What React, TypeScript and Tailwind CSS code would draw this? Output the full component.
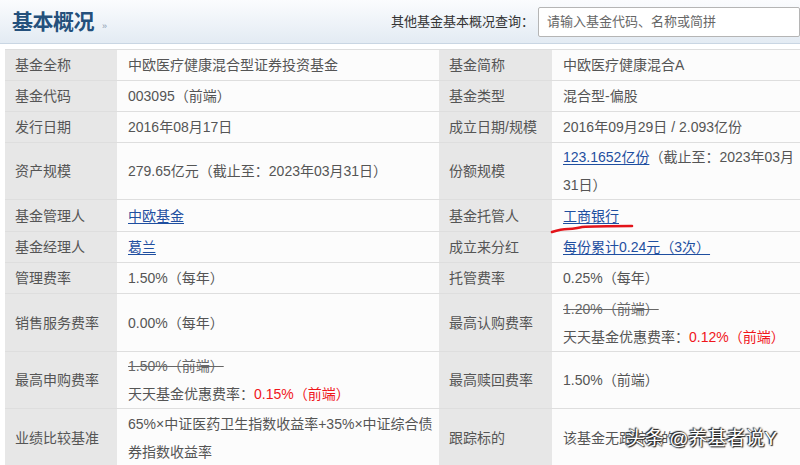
import React from 'react';

type Cell = React.ReactNode;

const link = (t: string) => <a className="text-[#1f4fa0] underline underline-offset-2">{t}</a>;
const strike = (t: string) => <span className="line-through text-[#666]">{t}</span>;
const red = (t: string) => <span className="text-[#f0161b]">{t}</span>;

const rows: { h: string; a: [string, Cell]; b: [string, Cell] }[] = [
  { h: 'h-[31px]', a: ['基金全称', '中欧医疗健康混合型证券投资基金'], b: ['基金简称', '中欧医疗健康混合A'] },
  { h: 'h-[31px]', a: ['基金代码', '003095（前端）'], b: ['基金类型', '混合型-偏股'] },
  { h: 'h-[31px]', a: ['发行日期', '2016年08月17日'], b: ['成立日期/规模', '2016年09月29日 / 2.093亿份'] },
  {
    h: 'h-[57px]',
    a: ['资产规模', '279.65亿元（截止至：2023年03月31日）'],
    b: ['份额规模', <>{link('123.1652亿份')}（截止至：2023年03月31日）</>],
  },
  { h: 'h-[32px]', a: ['基金管理人', link('中欧基金')], b: ['基金托管人', link('工商银行')] },
  { h: 'h-[31px]', a: ['基金经理人', link('葛兰')], b: ['成立来分红', link('每份累计0.24元（3次）')] },
  { h: 'h-[31px]', a: ['管理费率', '1.50%（每年）'], b: ['托管费率', '0.25%（每年）'] },
  {
    h: 'h-[58px]',
    a: ['销售服务费率', '0.00%（每年）'],
    b: ['最高认购费率', <>{strike('1.20%（前端）')}<br />天天基金优惠费率：{red('0.12%（前端）')}</>],
  },
  {
    h: 'h-[56px]',
    a: ['最高申购费率', <>{strike('1.50%（前端）')}<br />天天基金优惠费率：{red('0.15%（前端）')}</>],
    b: ['最高赎回费率', '1.50%（前端）'],
  },
  {
    h: 'h-[58px]',
    a: ['业绩比较基准', '65%×中证医药卫生指数收益率+35%×中证综合债券指数收益率'],
    b: ['跟踪标的', '该基金无跟踪标的'],
  },
];

export default function App() {
  return (
    <div
      className="relative w-[800px] h-[465px] overflow-hidden bg-white text-[#555]"
      style={{ fontFamily: '"Liberation Sans", "Noto Sans CJK SC", sans-serif' }}
    >
      <div className="flex h-[44px] items-center justify-between border-b border-[#c9d6e3] bg-gradient-to-b from-[#fbfcfe] to-[#e3ebf3] pl-[12px]">
        <div className="flex items-end gap-[8px]">
          <h1 className="text-[21px] font-bold tracking-[-0.5px] text-[#24507c]">基本概况</h1>
          <span className="mb-[6px] text-[9px] leading-none text-[#8a9ab0]">»</span>
        </div>
        <div className="flex items-center">
          <span className="text-[13px] text-[#333]">其他基金基本概况查询：</span>
          <div className="ml-[4px] flex h-[30px] w-[262px] items-center rounded-[2px] border border-[#b5b5b5] bg-white pl-[8px] text-[13px] text-[#666]">
            请输入基金代码、名称或简拼
          </div>
        </div>
      </div>
      <div className="pl-[5px] pt-[5px]">
        <table className="w-[795px] table-fixed border-collapse text-[14px] leading-[28px]">
          <colgroup>
            <col className="w-[112px]" />
            <col className="w-[322px]" />
            <col className="w-[113px]" />
            <col className="w-[248px]" />
          </colgroup>
          <tbody>
            {rows.map((r, i) => (
              <tr key={i} className={`${r.h} border-y border-[#dedede]`}>
                <td className="bg-[#e7e7e7] pl-[10px] align-middle text-[#555]">{r.a[0]}</td>
                <td className="bg-[#fcfcfc] pl-[11px] pr-[6px] align-middle">{r.a[1]}</td>
                <td className="bg-[#e7e7e7] pl-[10px] align-middle text-[#555]">{r.b[0]}</td>
                <td className="bg-[#fcfcfc] pl-[11px] pr-[2px] align-middle">{r.b[1]}</td>
              </tr>
            ))}
          </tbody>
        </table>
      </div>
      <svg className="absolute left-[550px] top-[221px]" width="84" height="14" viewBox="0 0 84 14">
        <path d="M2 11 C8 9 12 8 18 8 C24 8 26 7 32 6 C44 5 60 5 82 5" stroke="#e3141a" strokeWidth="2.6" fill="none" strokeLinecap="round" />
      </svg>
      <div
        className="absolute left-[626px] top-[425px] whitespace-nowrap text-[19px] leading-[28px] text-white"
        style={{ textShadow: '0 0 2px #222, 1px 1px 1px #222, -1px -1px 1px #222' }}
      >
        头条 @养基者说Y
      </div>
    </div>
  );
}
